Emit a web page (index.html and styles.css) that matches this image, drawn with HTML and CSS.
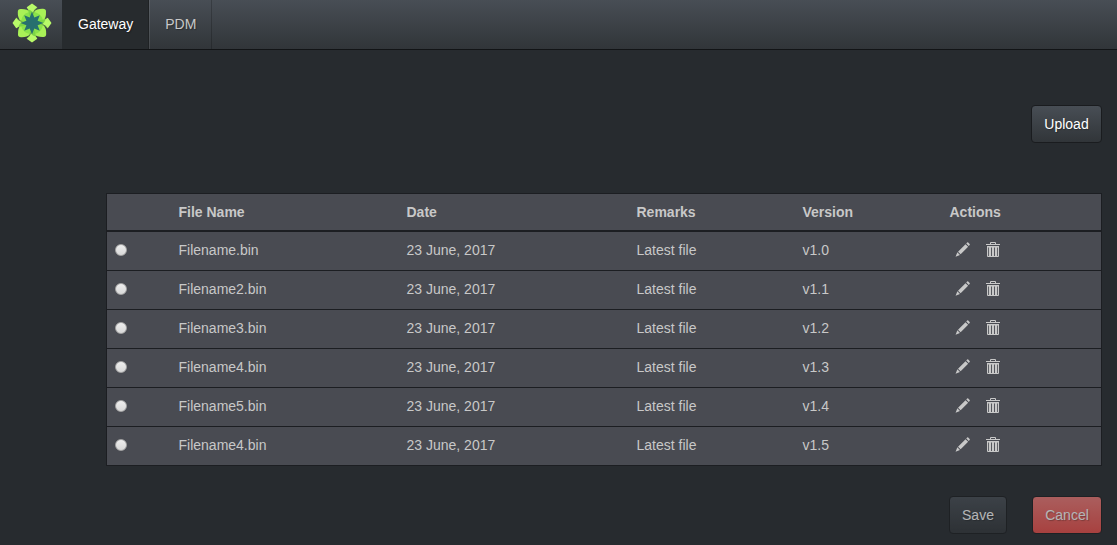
FILE: index.html
```html
<!DOCTYPE html>
<html lang="en">
<head>
<meta charset="utf-8">
<title>Gateway</title>
<link rel="stylesheet" href="styles.css">
</head>
<body>
<svg class="defs" aria-hidden="true">
  <symbol id="pencil" viewBox="0 0 16 16"><path d="M12 1.5l.9-.9q.6-.5 1.2 0l1.5 1.5q.5.6 0 1.2l-.9.9zM11.2 2.3l2.8 2.8-8 8-2.8-2.8zM2.5 11l2.8 2.8L.6 15.6z"/></symbol>
  <symbol id="trash" viewBox="0 0 14 16"><path fill-rule="evenodd" d="M4 2V1q0-1 1-1h4q1 0 1 1v1h4v1H0V2zM5 2h4V1H5zM1 4h12V14q0 1-1 1H2q-1 0-1-1zM2.2 5.5V14H3V5.5zM5 5.5V14h.9V5.5zM8.1 5.5V14H9V5.5zM11 5.5V14h.8V5.5z"/></symbol>
</svg>
<nav class="navbar">
  <a class="brand"><svg viewBox="-20 -20 40 40" width="40" height="40">
    <defs>
      <g id="petal">
        <path fill="#a9f157" d="M0 0L1.5-11Q5-14.5 11-14.2Q14-14.2 14-11.5Q14.3-5 11-1.5Z"/>
        <path fill="#8be34a" d="M0 0L1.2-11Q7-10 8.5-7.5Q10.5-6 11-1.2Z"/>
      </g>
      <g id="tip">
        <path fill="#b9fa69" d="M0-19.5L5.3-15.8Q2-13.5 1-10L-3-12Q-4.5-14-5.3-15.8Z"/>
        <path fill="#7dd545" d="M-4-13.5Q0-13 1.5-9L0 0L-3-9Z"/>
        <path fill="none" stroke="#5a9440" stroke-width=".7" d="M5.3-15.4Q2-13 1.3-9.5"/>
      </g>
    </defs>
    <use href="#petal"/><use href="#petal" transform="rotate(90)"/><use href="#petal" transform="rotate(180)"/><use href="#petal" transform="rotate(270)"/>
    <use href="#tip"/><use href="#tip" transform="rotate(90)"/><use href="#tip" transform="rotate(180)"/><use href="#tip" transform="rotate(270)"/>
    <path fill="#27706f" d="M0-11.5L2.3-5.6L7.8-7.8L5.6-2.3L11.5 0L5.6 2.3L7.8 7.8L2.3 5.6L0 11.5L-2.3 5.6L-7.8 7.8L-5.6 2.3L-11.5 0L-5.6-2.3L-7.8-7.8L-2.3-5.6Z"/>
  </svg></a>
  <a class="tab active">Gateway</a>
  <a class="tab">PDM</a>
</nav>
<main class="content">
  <div class="toolbar"><button class="btn upload">Upload</button></div>
  <table class="files">
    <colgroup><col class="c-pick"><col class="c-name"><col class="c-date"><col class="c-remarks"><col class="c-version"><col></colgroup>
    <thead><tr><th></th><th>File Name</th><th>Date</th><th>Remarks</th><th>Version</th><th>Actions</th></tr></thead>
    <tbody>
      <tr><td><span class="radio"></span></td><td>Filename.bin</td><td>23 June, 2017</td><td>Latest file</td><td>v1.0</td><td><div class="actions"><svg class="pencil"><use href="#pencil"/></svg><svg class="trash"><use href="#trash"/></svg></div></td></tr>
      <tr><td><span class="radio"></span></td><td>Filename2.bin</td><td>23 June, 2017</td><td>Latest file</td><td>v1.1</td><td><div class="actions"><svg class="pencil"><use href="#pencil"/></svg><svg class="trash"><use href="#trash"/></svg></div></td></tr>
      <tr><td><span class="radio"></span></td><td>Filename3.bin</td><td>23 June, 2017</td><td>Latest file</td><td>v1.2</td><td><div class="actions"><svg class="pencil"><use href="#pencil"/></svg><svg class="trash"><use href="#trash"/></svg></div></td></tr>
      <tr><td><span class="radio"></span></td><td>Filename4.bin</td><td>23 June, 2017</td><td>Latest file</td><td>v1.3</td><td><div class="actions"><svg class="pencil"><use href="#pencil"/></svg><svg class="trash"><use href="#trash"/></svg></div></td></tr>
      <tr><td><span class="radio"></span></td><td>Filename5.bin</td><td>23 June, 2017</td><td>Latest file</td><td>v1.4</td><td><div class="actions"><svg class="pencil"><use href="#pencil"/></svg><svg class="trash"><use href="#trash"/></svg></div></td></tr>
      <tr><td><span class="radio"></span></td><td>Filename4.bin</td><td>23 June, 2017</td><td>Latest file</td><td>v1.5</td><td><div class="actions"><svg class="pencil"><use href="#pencil"/></svg><svg class="trash"><use href="#trash"/></svg></div></td></tr>
    </tbody>
  </table>
  <div class="footer"><button class="btn save disabled">Save</button><button class="btn danger disabled">Cancel</button></div>
</main>
</body>
</html>
```
FILE: styles.css
```css
* { box-sizing: border-box; }
body {
  margin: 0;
  height: 545px;
  overflow: hidden;
  background: #272b2f;
  color: #c8c8c8;
  font: 14px/20px "Liberation Sans", Arial, sans-serif;
}
.defs { position: absolute; width: 0; height: 0; }
.navbar {
  display: flex;
  height: 50px;
  border-bottom: 1px solid #121416;
  background: linear-gradient(#484e55, #3a3f44 60%, #313539);
  text-shadow: 1px 1px 1px rgba(0, 0, 0, .3);
}
.brand { width: 62px; padding: 3px 0 0 12px; }
.brand svg { display: block; }
.tab {
  padding: 14px 15px 15px;
  border-right: 1px solid rgba(0, 0, 0, .2);
  border-left: 1px solid rgba(255, 255, 255, .1);
}
.tab.active { background: #272b2e; color: #fff; border-left-color: transparent; }
.content { padding: 55px 15px 0 106px; }
.toolbar { display: flex; justify-content: flex-end; }
.btn {
  height: 38px;
  padding: 0 12px;
  border: 1px solid #1a1c1f;
  border-radius: 4px;
  background: linear-gradient(#484e55, #3a3f44 60%, #313539);
  color: #fff;
  font: inherit;
  text-shadow: 1px 1px 1px rgba(0, 0, 0, .3);
}
.upload { width: 71px; }
.save { width: 58px; }
.btn.danger { width: 70px; background: linear-gradient(#f17a77, #ee5f5b 60%, #ec4d49); }
.btn.disabled { opacity: .65; }
.files {
  width: 996px;
  margin-top: 50px;
  table-layout: fixed;
  border-collapse: separate;
  border-spacing: 0;
  border: 1px solid #1c1e22;
  border-bottom: 0;
  background: #494b52;
}
.c-pick { width: 63.5px; }
.c-name { width: 228px; }
.c-date { width: 230px; }
.c-remarks { width: 166px; }
.c-version { width: 147px; }
th { height: 38px; padding: 0 8px; border-bottom: 2px solid #1c1e22; text-align: left; }
td { height: 39px; padding: 8px 8px 10px; border-bottom: 1px solid #1c1e22; }
.radio {
  display: block;
  width: 12px;
  height: 12px;
  border: 1px solid #a5a5a5;
  border-radius: 50%;
  background: linear-gradient(#eee, #d8d8d8);
}
.actions { display: flex; align-items: center; height: 20px; padding-left: 5.5px; gap: 16px; }
.actions svg { fill: #c8c8c8; }
.pencil { width: 15px; height: 15px; margin-bottom: 1px; }
.trash { width: 14px; height: 16px; }
.footer { display: flex; justify-content: flex-end; gap: 25px; margin-top: 30px; }
```
